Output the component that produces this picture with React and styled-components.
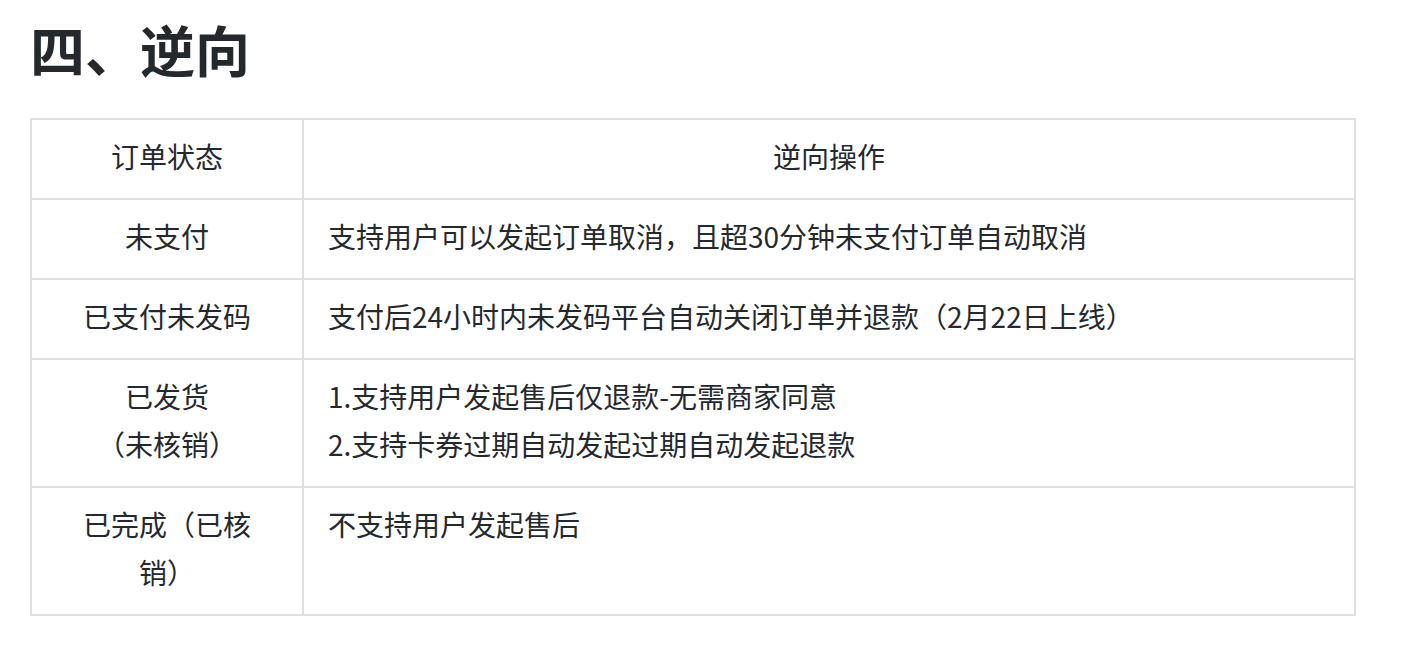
import React from 'react';
import styled, { createGlobalStyle } from 'styled-components';

const Global = createGlobalStyle`
    body {
        margin: 0;
        background: #fff;
        font-family: "Noto Sans CJK SC", "Noto Sans", sans-serif;
        color: #24292e;
    }
`;

const rows = [
    { state: ['订单状态'], action: ['逆向操作'], head: true },
    { state: ['未支付'], action: ['支持用户可以发起订单取消，且超30分钟未支付订单自动取消'] },
    { state: ['已支付未发码'], action: ['支付后24小时内未发码平台自动关闭订单并退款（2月22日上线）'] },
    { state: ['已发货', '（未核销）'], action: ['1.支持用户发起售后仅退款-无需商家同意', '2.支持卡券过期自动发起过期自动发起退款'] },
    { state: ['已完成（已核销）'], action: ['不支持用户发起售后'] },
];

const App = () => {
    return (
        <Page>
            <Global />
            <Title>四、逆向</Title>
            <Table>
                <colgroup>
                    <col style={{ width: 272 }} />
                    <col />
                </colgroup>
                <tbody>
                    {rows.map((r, i) => (
                        <tr key={i}>
                            <StateCell>
                                {r.state.map((s, j) => <div key={j}>{s}</div>)}
                            </StateCell>
                            <Cell center={r.head}>
                                {r.action.map((s, j) => <div key={j}>{s}</div>)}
                            </Cell>
                        </tr>
                    ))}
                </tbody>
            </Table>
        </Page>
    );
}

export default App;

const Page = styled.div`
    padding: 13px 50px 34px 30px;
`

const Title = styled.h1`
    margin: 0 0 35px;
    font-size: 55px;
    line-height: 70px;
    font-weight: 700;
    color: #24292e;
`

const Table = styled.table`
    width: 1326px;
    border-collapse: collapse;
    table-layout: fixed;
`

const Cell = styled.td`
    border: 2px solid #dfe0e4;
    padding: 12px 24px 18px;
    font-size: 28px;
    line-height: 48px;
    vertical-align: top;
    text-align: ${p => p.center ? 'center' : 'left'};
    color: #24292e;
`

const StateCell = styled(Cell)`
    padding-left: 38px;
    padding-right: 38px;
    text-align: center;
`
